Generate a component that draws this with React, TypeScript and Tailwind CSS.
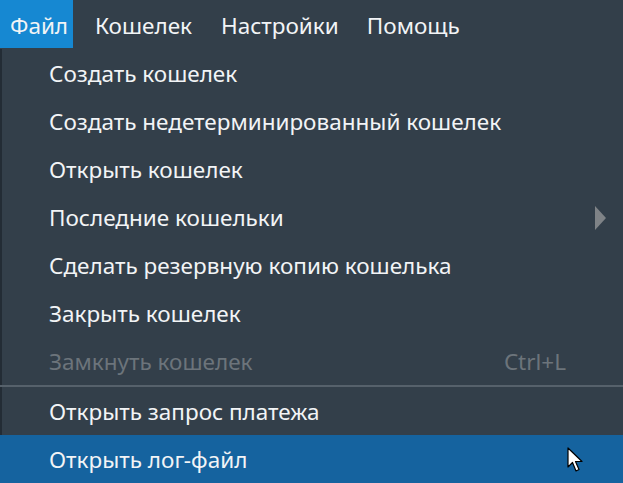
const items: { label: string; disabled?: boolean; shortcut?: string; submenu?: boolean }[] = [
  { label: 'Создать кошелек' },
  { label: 'Создать недетерминированный кошелек' },
  { label: 'Открыть кошелек' },
  { label: 'Последние кошельки', submenu: true },
  { label: 'Сделать резервную копию кошелька' },
  { label: 'Закрыть кошелек' },
  { label: 'Замкнуть кошелек', disabled: true, shortcut: 'Ctrl+L' },
];

function Row({ label, disabled, shortcut, submenu, edge }: { label: string; disabled?: boolean; shortcut?: string; submenu?: boolean; edge?: boolean }) {
  return (
    <div
      className={`h-12 flex items-center pt-[2px] pr-[57px] ${edge ? 'pl-[47px] border-l-2 border-[#232c35]' : 'pl-[49px]'} ${
        disabled ? 'text-[#6c747b]' : 'text-[#f2f4f6]'
      }`}
    >
      <span className="flex-1">{label}</span>
      {shortcut && <span>{shortcut}</span>}
      {submenu && (
        <svg width="12" height="24" viewBox="0 0 12 24" className="mr-[-41px]">
          <path d="M0 0 L11 12 L0 24 Z" fill="#7f8387" />
        </svg>
      )}
    </div>
  );
}

export default function App() {
  return (
    <div className="w-[623px] h-[483px] bg-[#333f4a] overflow-hidden text-[22.5px] font-['Noto_Sans',sans-serif]">
      <div className="h-12 flex items-center text-[#f2f4f6]">
        <div className="h-12 w-[73px] bg-[#1688d2] flex items-center pl-[10px] pt-[3px]">Файл</div>
        <div className="ml-[22px] pt-[3px]">Кошелек</div>
        <div className="ml-[29px] pt-[3px]">Настройки</div>
        <div className="ml-[28px] pt-[3px]">Помощь</div>
      </div>
      <div className="pt-px">
        {items.map(it => (
          <Row key={it.label} {...it} edge />
        ))}
        <div className="h-[2px] bg-[#56616b]" />
        <Row label="Открыть запрос платежа" edge />
        <div className="bg-[#15639f] relative">
          <Row label="Открыть лог-файл" />
          <svg width="18" height="27" viewBox="0 0 18 27" className="absolute left-[567px] top-[12px]">
            <path d="M1 1 L1 20 L5.5 15.5 L9 24 L12 22.5 L8.5 14.5 L15 14.5 Z" fill="#fff" stroke="#000" strokeWidth="1.2" strokeLinejoin="round" />
          </svg>
        </div>
      </div>
    </div>
  );
}
